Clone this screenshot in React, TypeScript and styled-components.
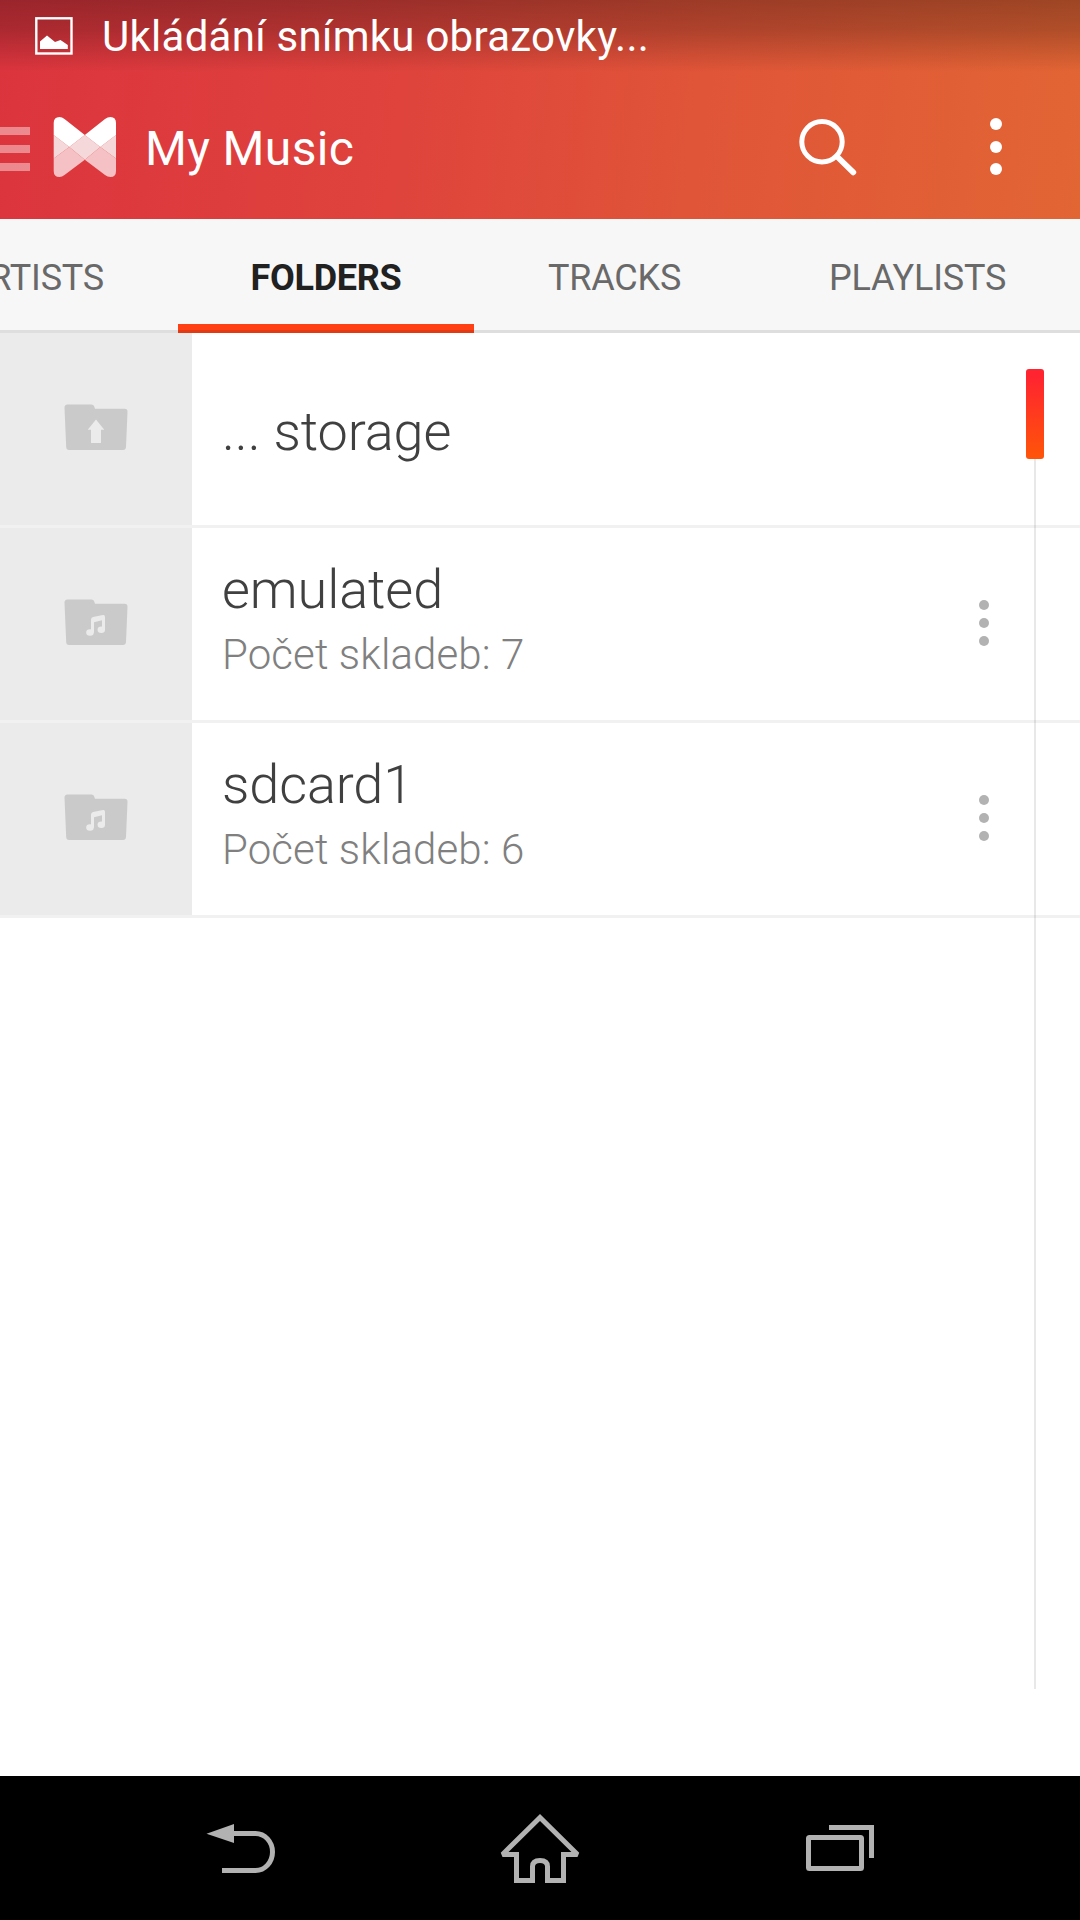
import React from "react";
import styled, { createGlobalStyle } from "styled-components";

const GlobalStyle = createGlobalStyle`
  * { box-sizing: border-box; }
  body { margin: 0; background: #fff; font-family: Roboto, "Liberation Sans", sans-serif; }
  svg { display: block; flex: none; }
`;

const Screen = styled.div`
  display: flex;
  flex-direction: column;
  width: 1080px;
  height: 1920px;
  overflow: hidden;
  background: #fff;
`;

const Header = styled.header`
  flex: none;
  height: 219px;
  color: #fff;
  background:
    linear-gradient(180deg, rgba(0, 0, 0, 0.3) 0, rgba(0, 0, 0, 0.22) 30px, rgba(0, 0, 0, 0) 72px),
    linear-gradient(96deg, #dc343e 0%, #df433c 37%, #e05538 65%, #e26534 100%);
`;

const StatusBar = styled.div`
  display: flex;
  align-items: center;
  gap: 29px;
  height: 72px;
  padding-left: 35px;
`;

const StatusText = styled.span`
  padding-top: 2px;
  font-size: 42px;
  letter-spacing: 0.27px;
  line-height: 72px;
  white-space: pre;
`;

const ActionBar = styled.div`
  display: flex;
  align-items: center;
  height: 147px;
  padding-right: 78px;
`;

const MenuLines = styled.div`
  display: grid;
  gap: 10px;
  width: 30px;
  margin: 7px 23px 0 0;
  span { height: 8px; background: rgba(255, 255, 255, 0.42); }
`;

const LogoSlot = styled.div`
  padding-top: 3px;
`;

const Title = styled.h1`
  flex: 1;
  margin: 7px 0 0 29px;
  font-size: 48px;
  font-weight: 400;
  letter-spacing: 0.35px;
  line-height: 56px;
`;

const Dots = styled.div<{ $size: number; $gap: number; $color: string }>`
  display: grid;
  gap: ${(p) => p.$gap}px;
  span {
    width: ${(p) => p.$size}px;
    height: ${(p) => p.$size}px;
    border-radius: 50%;
    background: ${(p) => p.$color};
  }
`;

const HeaderActions = styled.div`
  display: flex;
  align-items: center;
  gap: 132px;
  margin-top: 2px;
`;

const Tabs = styled.nav`
  display: flex;
  flex: none;
  height: 114px;
  background: linear-gradient(#f7f7f7 111px, #dedede 111px);
`;

const Tab = styled.div<{ $width: number; $active?: boolean }>`
  display: flex;
  flex: none;
  justify-content: ${(p) => (p.$width < 200 ? "flex-end" : "center")};
  width: ${(p) => p.$width}px;
  height: 114px;
  padding: ${(p) => (p.$width < 200 ? "0 74px 0 0" : "0")};
  font-size: 36px;
  font-weight: ${(p) => (p.$active ? 700 : 400)};
  letter-spacing: ${(p) => (p.$active ? "-0.3px" : "-0.2px")};
  line-height: 118px;
  color: ${(p) => (p.$active ? "#212121" : "#696969")};
  background: ${(p) =>
    p.$active ? "linear-gradient(transparent 105px, #ff4014 105px, #ff4014 111px, #e23b14 111px)" : "none"};
`;

const Content = styled.main`
  position: relative;
  flex: 1;
`;

const Row = styled.div`
  display: flex;
  height: 195px;
  border-bottom: 3px solid #f1f1f1;
`;

const Thumb = styled.div`
  display: flex;
  align-items: center;
  justify-content: center;
  width: 192px;
  padding-bottom: 4px;
  background: #ebebeb;
`;

const Labels = styled.div<{ $double: boolean }>`
  display: flex;
  flex: 1;
  flex-direction: column;
  justify-content: center;
  padding: ${(p) => (p.$double ? "0 0 10px 30px" : "6px 0 0 30px")};
  font-weight: 300;
`;

const Name = styled.div`
  font-size: 54px;
  letter-spacing: -0.1px;
  line-height: 64px;
  color: #404040;
`;

const Detail = styled.div`
  margin-top: 8px;
  font-size: 42px;
  letter-spacing: 0.1px;
  line-height: 50px;
  color: #808080;
`;

const RowMenu = styled.div`
  display: flex;
  align-items: center;
  padding: 0 91px 2px 0;
`;

const ScrollTrack = styled.div`
  position: absolute;
  top: 36px;
  right: 44px;
  width: 2px;
  height: 1320px;
  background: rgba(0, 0, 0, 0.09);
`;

const ScrollThumb = styled.div`
  position: absolute;
  top: 36px;
  right: 36px;
  width: 18px;
  height: 90px;
  border-radius: 3px;
  background: linear-gradient(#ff2430 8%, #ff5508 100%);
`;

const NavBar = styled.footer`
  display: flex;
  flex: none;
  justify-content: space-between;
  align-items: center;
  height: 144px;
  padding: 0 200px;
  background: #000;
`;

const PictureIcon = () => (
  <svg width="38" height="38" viewBox="0 0 38 38">
    <rect x="1.3" y="1.3" width="35.2" height="35.2" fill="none" stroke="#fff" strokeWidth="2.4" />
    <path d="M5 32V24.5L12 18.5L20 25L25.5 23L32.8 28V32Z" fill="#fff" />
  </svg>
);

const Logo = () => (
  <svg width="63" height="60" viewBox="0 0 63 60">
    <path d="M.7 41.5L16.3 30L31.8 42.7L47.3 30L63 41.5V54Q63 60 57.5 60Q54.500 60 52 58L31.800 42.700L11.500 58Q9 60 6.500 60Q.7 60 .7 54Z" fill="#f5c1c4" />
    <path d="M.7 18L16.300 30L31.800 18L47.300 30L63 18V41.500L47.300 30L31.800 42.700L16.300 30L.7 41.500Z" fill="#f5d8d9" />
    <path d="M.7 18V6Q.7 0 6.500 0Q9 0 11.500 2L31.800 18L52 2Q54.500 0 57.500 0Q63 0 63 6V18L47.300 30L31.800 18L16.300 30Z" fill="#fff" />
  </svg>
);

const SearchIcon = () => (
  <svg width="60" height="60" viewBox="0 0 60 60">
    <circle cx="24" cy="24.800" r="20.200" fill="none" stroke="#fff" strokeWidth="5" />
    <path d="M39 39.500L55.300 55.300" stroke="#fff" strokeWidth="5.800" strokeLinecap="round" />
  </svg>
);

const FolderIcon = ({ kind }: { kind: "up" | "music" }) => (
  <svg width="64" height="48" viewBox="0 0 64 48">
    <path d="M.5 5Q.3 1.500 3.500 1.500H27.500Q29.500 1.500 30 3L31 5.700H60.500Q63.700 5.700 63.500 9L62 44Q61.800 47 59 47H5Q2.300 47 2.200 44Z" fill="#cacaca" />
    {kind === "up" ? (
      <path d="M32 16.500L40.300 26.700H37V40H27V26.700H23.700Z" fill="#ebebeb" />
    ) : (
      <g fill="#ebebeb">
        <ellipse cx="26" cy="34.500" rx="3.800" ry="3.300" />
        <ellipse cx="37.300" cy="31.800" rx="3.700" ry="3.300" />
        <path d="M27 34.500V21.500Q27 19.500 29 19L39 17Q41 16.700 41 18.700V32H38V22.300L30 24.200V34.500Z" />
      </g>
    )}
  </svg>
);

const BackIcon = () => (
  <svg width="80" height="80" viewBox="200 1808 80 80">
    <path d="M206.500 1833.700L234 1824V1843Z" fill="#b2b2b2" />
    <path d="M233 1833.500H255.500A17 18.500 0 0 1 255.500 1870.500H222" fill="none" stroke="#b2b2b2" strokeWidth="5" />
  </svg>
);

const HomeIcon = () => (
  <svg width="80" height="80" viewBox="500 1808 80 80">
    <path
      d="M540 1817.500L502.500 1854.500H516.500V1880.500H532.500V1866.500Q532.500 1860.500 540 1860.500Q547.500 1860.500 547.500 1866.500V1880.500H563.500V1854.500H577.500Z"
      fill="none"
      stroke="#b2b2b2"
      strokeWidth="5"
      strokeLinejoin="miter"
      strokeMiterlimit="2"
    />
  </svg>
);

const RecentIcon = () => (
  <svg width="80" height="80" viewBox="800 1808 80 80">
    <rect x="808.500" y="1837.500" width="53" height="31" rx="1" fill="none" stroke="#b2b2b2" strokeWidth="5" />
    <path d="M829 1827.500H871.500V1858" fill="none" stroke="#b2b2b2" strokeWidth="5" />
  </svg>
);

const ThreeDots = (props: { size: number; gap: number; color: string }) => (
  <Dots $size={props.size} $gap={props.gap} $color={props.color}>
    <span />
    <span />
    <span />
  </Dots>
);

const folders: { name: string; detail?: string }[] = [
  { name: "... storage" },
  { name: "emulated", detail: "Počet skladeb: 7" },
  { name: "sdcard1", detail: "Počet skladeb: 6" },
];

const tabs = [
  { label: "ARTISTS", width: 178 },
  { label: "FOLDERS", width: 296, active: true },
  { label: "TRACKS", width: 281 },
  { label: "PLAYLISTS", width: 325 },
];

export default function App() {
  return (
    <Screen>
      <GlobalStyle />
      <Header>
        <StatusBar>
          <PictureIcon />
          <StatusText>Ukládání snímku obrazovky...</StatusText>
        </StatusBar>
        <ActionBar>
          <MenuLines>
            <span />
            <span />
            <span />
          </MenuLines>
          <LogoSlot>
            <Logo />
          </LogoSlot>
          <Title>My Music</Title>
          <HeaderActions>
            <SearchIcon />
            <ThreeDots size={12} gap={10.5} color="#fff" />
          </HeaderActions>
        </ActionBar>
      </Header>
      <Tabs>
        {tabs.map((t) => (
          <Tab key={t.label} $width={t.width} $active={t.active}>
            {t.label}
          </Tab>
        ))}
      </Tabs>
      <Content>
        {folders.map((f) => (
          <Row key={f.name}>
            <Thumb>
              <FolderIcon kind={f.detail ? "music" : "up"} />
            </Thumb>
            <Labels $double={!!f.detail}>
              <Name>{f.name}</Name>
              {f.detail && <Detail>{f.detail}</Detail>}
            </Labels>
            {f.detail && (
              <RowMenu>
                <ThreeDots size={10} gap={8} color="#b2b2b2" />
              </RowMenu>
            )}
          </Row>
        ))}
        <ScrollTrack />
        <ScrollThumb />
      </Content>
      <NavBar>
        <BackIcon />
        <HomeIcon />
        <RecentIcon />
      </NavBar>
    </Screen>
  );
}
